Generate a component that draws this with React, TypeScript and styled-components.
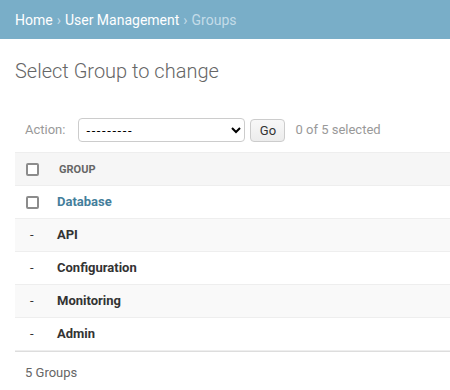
import React from "react";
import styled, { createGlobalStyle } from "styled-components";

const GlobalStyle = createGlobalStyle`
	html, body {
		margin: 0;
		padding: 0;
		background: #fff;
		font-family: Roboto, "Liberation Sans", sans-serif;
		color: #333;
		overflow: hidden;
	}
`;

const Page = styled.div`
	width: 450px;
	height: 390px;
	overflow: hidden;
`;

const Breadcrumbs = styled.div`
	background: #79aec8;
	height: 39px;
	box-sizing: border-box;
	padding: 0 15px;
	display: flex;
	align-items: center;
	font-size: 14px;
	color: #fff;
	white-space: nowrap;
	& .sep {
		color: #c4dce8;
		margin: 0 4px;
	}
	& .current {
		color: #c4dce8;
	}
`;

const Content = styled.div`
	padding: 20px 0 0 15px;
`;

const Title = styled.h1`
	margin: 0 0 25px;
	font-size: 20px;
	line-height: 24px;
	font-weight: 300;
	color: #666;
`;

const Actions = styled.div`
	display: flex;
	align-items: center;
	padding: 10px 10px;
	line-height: 24px;
	font-size: 13px;
	color: #999;
	white-space: nowrap;
`;

const ActionLabel = styled.label`
	margin-right: 13px;
`;

const ActionSelect = styled.select`
	width: 167px;
	height: 24px;
	box-sizing: border-box;
	border: 1px solid #ccc;
	border-radius: 4px;
	background: #fff;
	font-family: Roboto, "Liberation Sans", sans-serif;
	font-size: 13px;
	letter-spacing: 1.6px;
	color: #000;
	padding: 0 3px;
	margin: 0;
`;

const GoButton = styled.button`
	margin: 0 0 0 5px;
	width: 35px;
	height: 23px;
	box-sizing: border-box;
	border: 1px solid #ccc;
	border-radius: 4px;
	background: linear-gradient(#f8f8f8, #ececec);
	font-family: Roboto, "Liberation Sans", sans-serif;
	font-size: 13px;
	color: #333;
	padding: 0;
`;

const Counter = styled.span`
	margin-left: 10px;
`;

const Table = styled.table`
	width: 440px;
	border-collapse: collapse;
	font-size: 13px;
`;

const HeadCell = styled.th<{ $first?: boolean }>`
	background: #f6f6f6;
	border-top: 1px solid #eee;
	border-bottom: 1px solid #eee;
	height: 33px;
	box-sizing: border-box;
	padding: ${(p) => (p.$first ? "0 0 0 11px" : "0 0 0 2px")};
	width: ${(p) => (p.$first ? "42px" : "auto")};
	text-align: left;
	font-size: 11px;
	font-weight: 700;
	text-transform: uppercase;
	color: #666;
	vertical-align: middle;
`;

const Row = styled.tr<{ $alt: boolean }>`
	background: ${(p) => (p.$alt ? "#f9f9f9" : "#fff")};
	& td {
		border-bottom: 1px solid #eee;
		height: 33px;
		box-sizing: border-box;
		vertical-align: middle;
		line-height: 16px;
	}
`;

const MarkCell = styled.td`
	padding: 0 0 0 11px;
	color: #333;
	& .dash {
		padding-left: 4px;
	}
`;

const NameCell = styled.td`
	padding: 0;
	font-weight: 700;
	color: #333;
	& a {
		color: #447e9b;
		text-decoration: none;
	}
`;

const Check = styled.span`
	display: block;
	width: 13px;
	height: 13px;
	box-sizing: border-box;
	border: 2px solid #8c8c8c;
	border-radius: 2px;
	background: #fff;
`;

const Paginator = styled.div`
	border-top: 1px solid #ddd;
	padding: 10px 10px;
	line-height: 22px;
	font-size: 13px;
	color: #666;
`;

const groups = [
	{ name: "Database", link: true },
	{ name: "API", link: false },
	{ name: "Configuration", link: false },
	{ name: "Monitoring", link: false },
	{ name: "Admin", link: false },
];

export default function App() {
	return (
		<Page>
			<GlobalStyle />
			<Breadcrumbs>
				<span>Home</span>
				<span className="sep">›</span>
				<span>User Management</span>
				<span className="sep">›</span>
				<span className="current">Groups</span>
			</Breadcrumbs>
			<Content>
				<Title>Select Group to change</Title>
				<Actions>
					<ActionLabel>Action:</ActionLabel>
					<ActionSelect defaultValue="">
						<option value="">---------</option>
					</ActionSelect>
					<GoButton>Go</GoButton>
					<Counter>0 of 5 selected</Counter>
				</Actions>
				<Table>
					<thead>
						<tr>
							<HeadCell $first>
								<Check />
							</HeadCell>
							<HeadCell>Group</HeadCell>
						</tr>
					</thead>
					<tbody>
						{groups.map((g, i) => (
							<Row key={g.name} $alt={i % 2 === 1}>
								<MarkCell>
									{g.link ? <Check /> : <span className="dash">-</span>}
								</MarkCell>
								<NameCell>
									{g.link ? <a href="#">{g.name}</a> : g.name}
								</NameCell>
							</Row>
						))}
					</tbody>
				</Table>
				<Paginator>5 Groups</Paginator>
			</Content>
		</Page>
	);
}
